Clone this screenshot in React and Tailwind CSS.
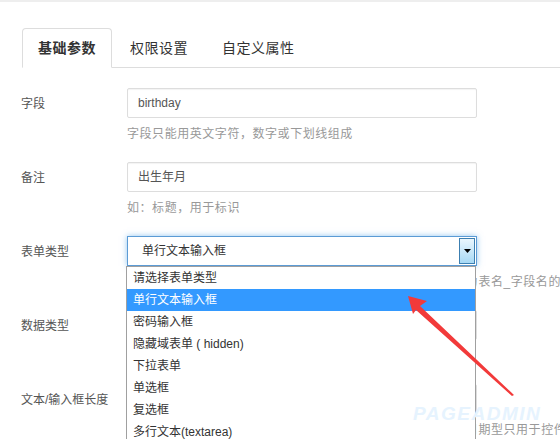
const TABS = ["基础参数", "权限设置", "自定义属性"];

const OPTIONS = [
  "请选择表单类型",
  "单行文本输入框",
  "密码输入框",
  "隐藏域表单 ( hidden)",
  "下拉表单",
  "单选框",
  "复选框",
  "多行文本(textarea)",
];

// plain text field with a help line under it
const Row = ({ label, value, help, children }) => (
  <div className="flex mb-[20px]">
    <div className="w-[106px] h-[30px] pt-[2px] flex items-center text-[12px] text-[#555] leading-none">
      {label}
    </div>
    <div className="relative w-[350px]">
      {children || (
        <div className="h-[30px] border border-[#ddd] rounded-[2px] shadow-[inset_0_1px_1px_rgba(0,0,0,0.05)] flex items-center pl-[10px] text-[12px] text-[#555]">
          {value}
        </div>
      )}
      <div className="mt-[6px] h-[18px] pt-[2px] leading-[16px] text-[12px] tracking-[0.55px] text-[#999] whitespace-nowrap">
        {help}
      </div>
    </div>
  </div>
);

const App = () => {
  const selected = 1;

  return (
    <div className="relative w-[560px] h-[439px] overflow-hidden bg-white font-['Liberation_Sans','Noto_Sans_CJK_SC',sans-serif]">
      <div className="h-[2px] bg-[#eee]" />

      {/* tabs */}
      <div className="pl-[22px] pt-[26px]">
        <ul className="flex items-end border-b border-[#ddd]">
          {TABS.map((tab, i) => (
            <li
              key={tab}
              className={`-mb-px mr-[2px] h-[40px] px-[15px] flex items-center border rounded-t-[4px] text-[14px] tracking-[0.5px] text-[#333] ${
                i === 0
                  ? "border-[#ddd] border-b-transparent bg-white font-bold"
                  : "border-transparent"
              }`}
            >
              {tab}
            </li>
          ))}
        </ul>
      </div>

      {/* form */}
      <div className="pl-[21px] pt-[20px]">
        <Row label="字段" value="birthday" help="字段只能用英文字符，数字或下划线组成" />
        <Row label="备注" value="出生年月" help="如：标题，用于标识" />
        <Row
          label="表单类型"
          help="系统在数据库中创建字段时，实际存储的字段名称会自动组合为表名_字段名的形式"
        >
          <div className="relative z-20 h-[30px] border border-[#5b9bd5] shadow-[0_0_6px_rgba(102,175,233,0.7)] bg-white flex items-center pl-[14px] text-[12px] text-[#333]">
            单行文本输入框
            <div className="absolute right-[1px] top-[1px] bottom-[1px] w-[16px] border border-[#3c7fb1] bg-gradient-to-b from-[#eaf6fd] to-[#a7d9f5] flex items-center justify-center">
              <svg width="7" height="4" viewBox="0 0 7 4">
                <path d="M0 0H7L3.5 4Z" fill="#000" />
              </svg>
            </div>
          </div>
          <ul className="absolute z-20 left-[-1px] top-[30px] w-[350px] border border-[#a0a0a0] bg-white">
            {OPTIONS.map((opt, i) => (
              <li
                key={opt}
                className={`h-[22px] flex items-center pl-[6px] text-[12px] whitespace-nowrap ${
                  i === selected ? "bg-[#3399ff] text-white" : "text-[#333]"
                }`}
              >
                {opt}
              </li>
            ))}
          </ul>
        </Row>
        <Row label="数据类型" value="" help="选择字段在数据库中的存储类型" />
        <Row
          label="文本/输入框长度"
          value=""
          help="设置文本输入框的显示长度，单位为像素，默认空，数字型和日期型只用于控件宽度"
        />
      </div>

      {/* watermark */}
      <div className="absolute z-30 left-[413px] top-[404px] text-[19px] font-bold italic tracking-[1.5px] text-[#e6f3fe] leading-none">
        PAGEADMIN
      </div>

      {/* red pointer arrow */}
      <svg className="absolute left-0 top-0 z-30" width="560" height="439">
        <polygon
          points="408,296 427,301 420,306 514,395 512,396 416,310 413,314"
          fill="#f23a3a"
        />
      </svg>
    </div>
  );
};

export default App;
